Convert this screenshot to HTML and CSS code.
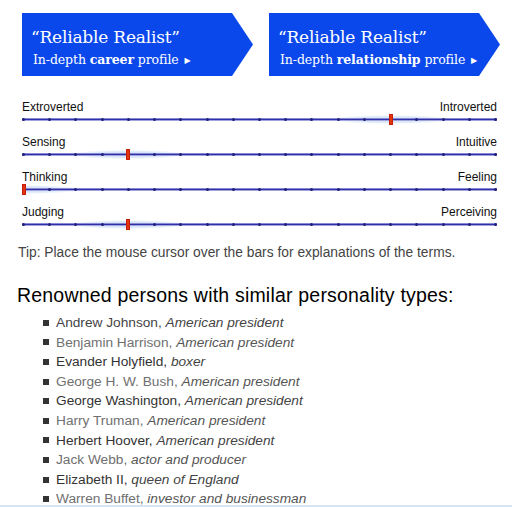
FILE: index.html
```
<!DOCTYPE html>
<html>
	<head>
		<meta charset="utf-8">
		<link rel="stylesheet" href="styles.css">
	</head>
	<body>
		<div id="banners">
			<a class="banner" href="#career">
				<span class="bannerTitle">&ldquo;Reliable Realist&rdquo;</span>
				<span class="bannerLink">In-depth <b>career</b> profile <span class="arrow">&#9654;</span></span>
			</a>
			<a class="banner" href="#relationship">
				<span class="bannerTitle">&ldquo;Reliable Realist&rdquo;</span>
				<span class="bannerLink">In-depth <b>relationship</b> profile <span class="arrow">&#9654;</span></span>
			</a>
		</div>

		<div id="scales">
			<div class="scale">
				<div class="scaleLabels"><span>Extroverted</span><span>Introverted</span></div>
				<div class="track">
					<div class="glowArea"><div class="glow" style="left:77.78%"></div></div>
					<div class="ticks"><i></i><i></i><i></i><i></i><i></i><i></i><i></i><i></i><i></i><i></i><i></i><i></i><i></i><i></i><i></i><i></i><i></i><i></i><i></i></div>
					<div class="marker" style="left:77.78%"></div>
				</div>
			</div>
			<div class="scale">
				<div class="scaleLabels"><span>Sensing</span><span>Intuitive</span></div>
				<div class="track">
					<div class="glowArea"><div class="glow" style="left:22.22%"></div></div>
					<div class="ticks"><i></i><i></i><i></i><i></i><i></i><i></i><i></i><i></i><i></i><i></i><i></i><i></i><i></i><i></i><i></i><i></i><i></i><i></i><i></i></div>
					<div class="marker" style="left:22.22%"></div>
				</div>
			</div>
			<div class="scale">
				<div class="scaleLabels"><span>Thinking</span><span>Feeling</span></div>
				<div class="track">
					<div class="glowArea"><div class="glow" style="left:0%"></div></div>
					<div class="ticks"><i></i><i></i><i></i><i></i><i></i><i></i><i></i><i></i><i></i><i></i><i></i><i></i><i></i><i></i><i></i><i></i><i></i><i></i><i></i></div>
					<div class="marker" style="left:0.4%"></div>
				</div>
			</div>
			<div class="scale">
				<div class="scaleLabels"><span>Judging</span><span>Perceiving</span></div>
				<div class="track">
					<div class="glowArea"><div class="glow" style="left:22.22%"></div></div>
					<div class="ticks"><i></i><i></i><i></i><i></i><i></i><i></i><i></i><i></i><i></i><i></i><i></i><i></i><i></i><i></i><i></i><i></i><i></i><i></i><i></i></div>
					<div class="marker" style="left:22.22%"></div>
				</div>
			</div>
		</div>

		<p class="tip">Tip: Place the mouse cursor over the bars for explanations of the terms.</p>

		<h2 class="famousTitle">Renowned persons with similar personality types:</h2>
		<ul class="famous">
			<li class="first">Andrew Johnson, <em>American president</em></li>
			<li class="light">Benjamin Harrison, <em>American president</em></li>
			<li>Evander Holyfield, <em>boxer</em></li>
			<li class="light">George H. W. Bush, <em>American president</em></li>
			<li>George Washington, <em>American president</em></li>
			<li class="light">Harry Truman, <em>American president</em></li>
			<li>Herbert Hoover, <em>American president</em></li>
			<li class="light">Jack Webb, <em>actor and producer</em></li>
			<li>Elizabeth II, <em>queen of England</em></li>
			<li class="light">Warren Buffet, <em>investor and businessman</em></li>
		</ul>
	</body>
</html>
```

FILE: styles.css
```
html{
	height:100%;
	box-sizing:border-box;
	border-bottom:2px solid #d4e5f6;
	overflow:hidden;
}
body{
	margin:0px;
	padding:0px;
	background-color:#ffffff;
	font-family:"Liberation Sans", Arial, sans-serif;
	color:#111111;
}
#banners{
	display:flex;
	gap:16px;
	margin:13px 0px 0px 22px;
}
.banner{
	display:flex;
	flex-direction:column;
	width:231px;
	height:63px;
	box-sizing:border-box;
	padding:14px 0px 0px 11px;
	background-color:#0a48ec;
	color:#ffffff;
	text-decoration:none;
	font-family:"DejaVu Serif", serif;
	clip-path:polygon(0 0, calc(100% - 21px) 0, 100% 50%, calc(100% - 21px) 100%, 0 100%);
}
.bannerTitle{
	font-size:17px;
	line-height:20px;
	letter-spacing:-0.2px;
	margin-left:-2px;
}
.bannerLink{
	margin-top:4px;
	font-size:12.5px;
	line-height:18px;
	letter-spacing:-0.1px;
	white-space:nowrap;
}
.arrow{
	font-size:8px;
	vertical-align:1px;
	margin-left:2px;
}
#scales{
	margin:24px 15px 0px 22px;
}
.scale{
	margin-bottom:10px;
}
.scaleLabels{
	display:flex;
	justify-content:space-between;
	font-size:12px;
	line-height:14px;
	color:#111111;
}
.track{
	position:relative;
	height:11px;
}
.glowArea{
	position:absolute;
	left:0px;
	right:0px;
	top:0px;
	bottom:0px;
	overflow:hidden;
}
.glow{
	position:absolute;
	top:1px;
	width:120px;
	height:9px;
	margin-left:-60px;
	background:radial-gradient(ellipse at center, #c6def7 0%, #dceafa 45%, rgba(255,255,255,0) 72%);
}
.ticks{
	position:absolute;
	left:0px;
	right:0px;
	top:4px;
	height:3px;
	display:flex;
	justify-content:space-between;
	align-items:center;
	background:linear-gradient(#8a8ad4, #8a8ad4) 0 0/100% 1px no-repeat,
		linear-gradient(#3030a8, #3030a8) 0 1px/100% 1px no-repeat,
		linear-gradient(#a4a4dc, #a4a4dc) 0 2px/100% 1px no-repeat;
}
.ticks i{
	display:block;
	width:3px;
	height:3px;
	border-radius:2px;
	background-color:#20207a;
}
.marker{
	position:absolute;
	top:0px;
	width:4px;
	height:11px;
	margin-left:-2px;
	background-color:#e2350f;
	box-shadow:inset 0px 0px 0px 1px #c82008;
}
.tip{
	margin:15px 0px 0px 18px;
	font-size:13.8px;
	line-height:16px;
	color:#444444;
}
.famousTitle{
	margin:23px 0px 0px 17px;
	font-size:19.5px;
	font-weight:normal;
	line-height:22px;
	letter-spacing:0.2px;
	color:#000000;
}
.famous{
	list-style:none;
	margin:7px 0px 0px 0px;
	padding:0px 0px 0px 43px;
	font-size:13.7px;
	line-height:19.6px;
	color:#333333;
}
.famous li{
	display:flex;
	align-items:center;
	white-space:pre;
}
.famous li::before{
	content:"";
	width:6px;
	height:6px;
	margin-right:7px;
	background-color:#333333;
}
.famous .first{
	color:#444444;
}
.famous .light{
	color:#707070;
}
.famous em{
	color:#444444;
}
.famous .light em{
	color:#555555;
}
```
